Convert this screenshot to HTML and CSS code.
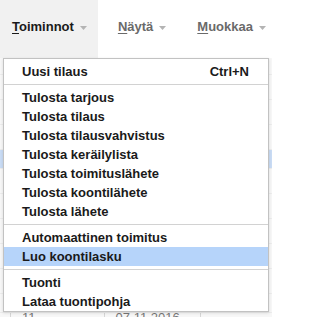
FILE: index.html
```html
<!DOCTYPE html>
<html lang="fi">
<head>
<meta charset="utf-8">
<title>Toiminnot</title>
<link rel="stylesheet" href="styles.css">
</head>
<body>
<div class="menubar">
  <div class="tab tab-active"><span class="label"><u>T</u>oiminnot</span><svg class="caret" width="7" height="4" viewBox="0 0 7 4"><path d="M0 0H7L3.5 4Z"/></svg></div>
  <div class="tab"><span class="label"><u>N</u>äytä</span><svg class="caret" width="7" height="4" viewBox="0 0 7 4"><path d="M0 0H7L3.5 4Z"/></svg></div>
  <div class="tab"><span class="label"><u>M</u>uokkaa</span><svg class="caret" width="7" height="4" viewBox="0 0 7 4"><path d="M0 0H7L3.5 4Z"/></svg></div>
</div>

<div class="grid">
  <div class="row row-first"></div>
  <div class="row"></div>
  <div class="row"></div>
  <div class="row"></div>
  <div class="row row-selected"></div>
  <div class="row"></div>
  <div class="row"></div>
  <div class="row"></div>
  <div class="row"></div>
  <div class="row"></div>
  <div class="row row-last"></div>
  <div class="row-data"><span class="cell c1">11</span><span class="cell c2">07.11.2016</span><span class="cell c3"></span></div>
</div>

<div class="dropdown">
  <div class="item"><span>Uusi tilaus</span><span class="shortcut">Ctrl+N</span></div>
  <div class="sep"></div>
  <div class="item">Tulosta tarjous</div>
  <div class="item">Tulosta tilaus</div>
  <div class="item">Tulosta tilausvahvistus</div>
  <div class="item">Tulosta keräilylista</div>
  <div class="item">Tulosta toimituslähete</div>
  <div class="item">Tulosta koontilähete</div>
  <div class="item">Tulosta lähete</div>
  <div class="sep"></div>
  <div class="item">Automaattinen toimitus</div>
  <div class="item item-hover">Luo koontilasku</div>
  <div class="sep"></div>
  <div class="item">Tuonti</div>
  <div class="item">Lataa tuontipohja</div>
</div>
</body>
</html>
```

FILE: styles.css
```css
html, body {
  margin: 0;
  padding: 0;
}
body {
  width: 272px;
  height: 317px;
  overflow: hidden;
  position: relative;
  background: #ffffff;
  font-family: "Liberation Sans", Arial, sans-serif;
  font-size: 13px;
  font-weight: bold;
  color: #1a1a1a;
}
.menubar {
  display: flex;
  height: 58px;
  gap: 8px;
}
.tab {
  display: flex;
  align-items: flex-start;
  padding: 19px 11px 0 12px;
  line-height: 15px;
  color: #6a6a6a;
}
.tab-active {
  background: #f1f1f1;
  color: #1a1a1a;
}
.tab u {
  text-decoration-thickness: 1px;
  text-underline-offset: 2px;
}
.caret {
  margin: 7px 0 0 6px;
  fill: #b4b4b4;
}
.grid {
  background: #f7f7f7;
  height: 259px;
  overflow: hidden;
  display: flex;
  flex-direction: column;
}
.row {
  height: 24px;
  border-bottom: 1px solid #ececec;
  flex: none;
}
.row-first {
  height: 16px;
}
.row-last {
  height: 18px;
}
.row-selected {
  background: #c9dcf5;
  height: 18px;
}
.row-data {
  display: flex;
  font-weight: normal;
  color: #777;
  line-height: 10px;
  height: 10px;
  flex: none;
}
.cell {
  border-left: 1px solid #d6d6d6;
  padding: 0 0 0 11px;
}
.c1 { margin-left: 10px; width: 87px; }
.c2 { width: 90px; }
.c3 { flex: 1; margin-right: 60px; }

.dropdown {
  position: absolute;
  top: 58px;
  left: 3px;
  width: 264px;
  background: #ffffff;
  border: 1px solid #c2c2c2;
  box-shadow: 0 1px 3px rgba(0, 0, 0, 0.12);
  padding: 3px 0 0;
}
.item {
  display: flex;
  justify-content: space-between;
  height: 19px;
  line-height: 19px;
  padding: 0 19px 0 18px;
  color: #1a1a1a;
  white-space: nowrap;
}
.item-hover {
  background: #b6d4fa;
}
.sep {
  height: 1px;
  background: #d2d2d2;
  margin: 3px 0;
}
```
